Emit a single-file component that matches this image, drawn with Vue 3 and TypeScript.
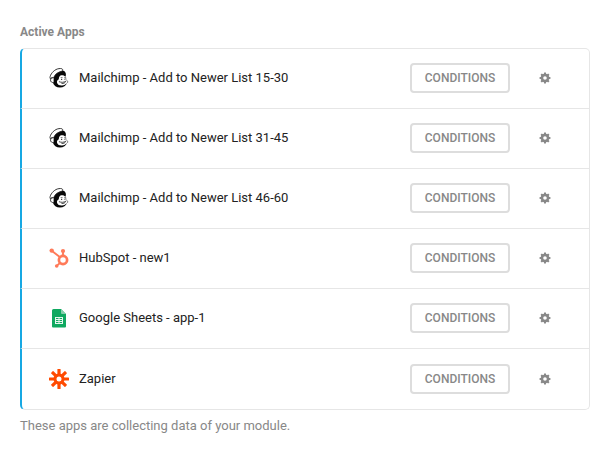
<script setup lang="ts">
type IconName = 'mailchimp' | 'hubspot' | 'sheets' | 'zapier'

interface ActiveApp {
  id: number
  icon: IconName
  name: string
}

const apps: ActiveApp[] = [
  { id: 1, icon: 'mailchimp', name: 'Mailchimp - Add to Newer List 15-30' },
  { id: 2, icon: 'mailchimp', name: 'Mailchimp - Add to Newer List 31-45' },
  { id: 3, icon: 'mailchimp', name: 'Mailchimp - Add to Newer List 46-60' },
  { id: 4, icon: 'hubspot', name: 'HubSpot - new1' },
  { id: 5, icon: 'sheets', name: 'Google Sheets - app-1' },
  { id: 6, icon: 'zapier', name: 'Zapier' },
]

const spokes = [0, 45, 90, 135, 180, 225, 270, 315]
</script>

<template>
  <main class="panel">
    <h2 class="label">Active Apps</h2>
    <ul class="apps">
      <li v-for="app in apps" :key="app.id" class="app">
        <svg v-if="app.icon === 'mailchimp'" class="logo" viewBox="0 0 20 20" aria-hidden="true">
          <path d="M4.300 10.500C5 6 8.500 2.800 12.500 2.400c2.600-.2 4.300 1.400 4.400 3.600.1 1-.1 2-.5 2.800-1-1.500-2.600-1.900-4.300-1.500-1.600.5-2.200 2-2.300 4-1.500.8-2.200 2.200-1.700 3.700.7 1.800 2.600 2.700 4.900 2.500 2.100-.2 3.800-1.200 5-2.800-.9 3.100-3.600 4.900-7 4.900-3.600 0-6.300-1.900-7.200-5-.3-1.300-.1-2.600.5-4.100Z" fill="#080808" />
          <path d="M1 9.800C1 6.500 4.500 2.300 8.300 1c2.200-.7 4.700-.7 5.300.4.300.7 0 1.300-.6 1.700C9.300 4 6 6 4.700 9.600c-1.400-.3-2.600.1-3.300 1.200Z" fill="#fff" stroke="#222" stroke-width=".9" stroke-linejoin="round" />
          <path d="M4.700 10c-1.800-.6-3.200.6-3.200 2.200.1 1.600 1.400 2.500 3.100 2.300" fill="#fff" stroke="#222" stroke-width=".9" />
          <path d="M16.500 8.800c.3.900.2 1.800.4 2.800l.8.8c1 .5 1.200 1.300.8 2.400" fill="none" stroke="#555" stroke-width=".8" />
          <path d="M11.700 9.500h1.800M15 9.500h.8" fill="none" stroke="#555" stroke-width=".7" />
          <path d="M12 11.300h1.200M15 11.200h.6" fill="none" stroke="#111" stroke-width="1" />
          <path d="M10.300 13.800c2.200.9 4.500.6 6.400-.5-.5 1.500-2 2.400-3.800 2.200" fill="none" stroke="#222" stroke-width=".8" stroke-linecap="round" />
        </svg>

        <svg v-else-if="app.icon === 'hubspot'" class="logo" viewBox="0 0 20 20" aria-hidden="true">
          <g fill="none" stroke="#ff7a59">
            <circle cx="14" cy="12" r="4.100" stroke-width="2.700" />
            <path d="M14 7.500V3M10.800 9 3 3M10.900 15 8 17.600" stroke-width="1.900" />
          </g>
          <g fill="#ff7a59">
            <circle cx="2.700" cy="2.600" r="2.200" />
            <circle cx="14" cy="3" r="2.100" />
            <circle cx="7.700" cy="18" r="1.800" />
          </g>
        </svg>

        <svg v-else-if="app.icon === 'sheets'" class="logo" viewBox="0 0 20 20" aria-hidden="true">
          <path d="M4.500 1H12l5 5v12.500a1 1 0 0 1-1 1H4a1 1 0 0 1-1-1v-16A1.500 1.500 0 0 1 4.500 1Z" fill="#0fa960" />
          <path d="M12 1l5 5h-4a1 1 0 0 1-1-1Z" fill="#87ceac" />
          <path d="M6 9h8v7H6Z" fill="#e7f5ee" />
          <path d="M7 10h2.500v1H7Zm3.500 0H13v1h-2.500ZM7 12h2.500v1H7Zm3.500 0H13v1h-2.500ZM7 14h2.500v1H7Zm3.500 0H13v1h-2.500Z" fill="#0fa960" />
        </svg>

        <svg v-else class="logo" viewBox="0 0 20 20" aria-hidden="true">
          <circle cx="10" cy="10" r="4" fill="none" stroke="#ff4a00" stroke-width="3" />
          <rect
            v-for="angle in spokes"
            :key="angle"
            x="8.400"
            y="0"
            width="3.200"
            height="7"
            rx=".6"
            fill="#ff4a00"
            :transform="`rotate(${angle} 10 10)`"
          />
        </svg>

        <span class="name">{{ app.name }}</span>
        <button type="button" class="conditions">CONDITIONS</button>
        <button type="button" class="settings" :aria-label="`Settings for ${app.name}`">
          <svg class="gear" viewBox="0 0 12 12" aria-hidden="true">
            <circle cx="6" cy="6" r="3" fill="none" stroke="#888" stroke-width="2.400" />
            <path
              v-for="angle in spokes"
              :key="angle"
              d="M5.100.6h1.800l.4 2.200H4.700Z"
              fill="#888"
              :transform="`rotate(${angle} 6 6)`"
            />
          </svg>
        </button>
      </li>
    </ul>
    <p class="note">These apps are collecting data of your module.</p>
  </main>
</template>

<style>
body {
  margin: 0;
  background: #fff;
}
</style>

<style scoped>
.panel {
  padding: 24px 20px 16px;
  font-family: Roboto, "Liberation Sans", sans-serif;
  font-size: 13px;
  line-height: 22px;
  color: #888;
}

.label {
  margin: 0 0 8px;
  font-size: 12px;
  font-weight: 700;
  line-height: 16px;
}

.apps {
  margin: 0;
  padding: 0;
  list-style: none;
}

.app {
  display: flex;
  align-items: center;
  box-sizing: border-box;
  height: 60px;
  padding: 0 29px 1px 27px;
  border: 0 solid #e6e6e6;
  border-right-width: 1px;
  border-bottom-width: 1px;
  border-left: 2px solid #17a8e3;
}

.app:first-child {
  height: 61px;
  border-top-width: 1px;
  border-radius: 5px 5px 0 0;
}

.app:last-child {
  height: 61px;
  padding-bottom: 0;
  border-radius: 0 0 5px 5px;
}

.logo {
  flex: none;
  width: 20px;
  height: 20px;
  margin-right: 10px;
}

.name {
  flex: 1;
  min-width: 0;
  font-weight: 400;
  color: #222;
}

.conditions {
  flex: none;
  width: 100px;
  height: 30px;
  margin: 0 20px 0 10px;
  padding: 0;
  border: 2px solid #ddd;
  border-radius: 4px;
  background: #fff;
  font: 500 12px/16px Roboto, "Liberation Sans", sans-serif;
  color: #888;
  cursor: pointer;
}

.settings {
  display: flex;
  flex: none;
  align-items: center;
  justify-content: center;
  width: 30px;
  height: 30px;
  padding: 0;
  border: 0;
  background: none;
  cursor: pointer;
}

.gear {
  width: 12px;
  height: 12px;
}

.note {
  margin: 5px 0 0;
}
</style>
